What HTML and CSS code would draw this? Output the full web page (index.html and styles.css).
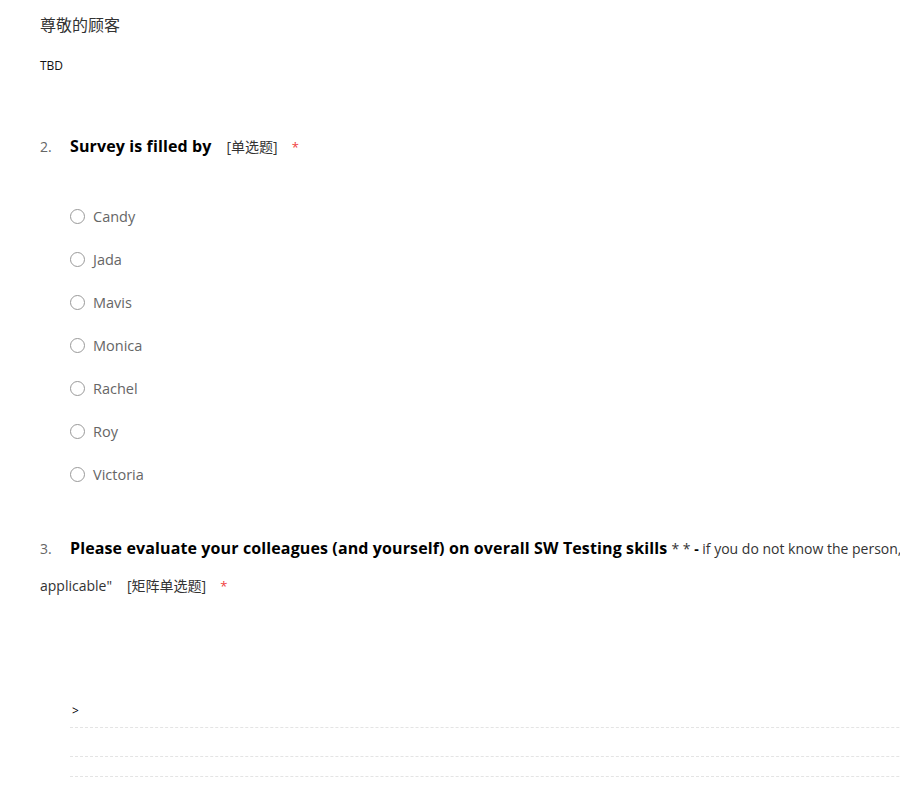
FILE: index.html
```html
<!DOCTYPE html>
<html lang="zh-CN">
<head>
<meta charset="utf-8">
<title>Survey</title>
<link rel="stylesheet" href="styles.css">
</head>
<body>
<div class="page">
  <div class="intro">
    <div class="greeting">尊敬的顾客</div>
    <div class="desc">TBD</div>
  </div>

  <div class="question q2">
    <div class="q-head">
      <span class="q-num">2.</span><span class="q-title">Survey is filled by</span><span class="q-type">[单选题]</span><span class="req">*</span>
    </div>
    <ul class="options">
      <li class="option"><span class="radio"></span><span class="opt-label">Candy</span></li>
      <li class="option"><span class="radio"></span><span class="opt-label">Jada</span></li>
      <li class="option"><span class="radio"></span><span class="opt-label">Mavis</span></li>
      <li class="option"><span class="radio"></span><span class="opt-label">Monica</span></li>
      <li class="option"><span class="radio"></span><span class="opt-label">Rachel</span></li>
      <li class="option"><span class="radio"></span><span class="opt-label">Roy</span></li>
      <li class="option"><span class="radio"></span><span class="opt-label">Victoria</span></li>
    </ul>
  </div>

  <div class="question q3">
    <div class="q-head wrap">
      <span class="q-num">3.</span><span class="q-title">Please evaluate your colleagues (and yourself) on overall SW Testing skills</span> <span class="q-note">* * <b>-</b> if you do not know the person, please choose "Not</span><br><span class="q-note">applicable"</span><span class="q-type">[矩阵单选题]</span><span class="req">*</span>
    </div>
    <div class="matrix">
      <div class="m-row m-head"><span class="m-arrow">&gt;</span></div>
      <div class="m-row m-r1"></div>
      <div class="m-row m-r2"></div>
    </div>
  </div>
</div>
</body>
</html>
```
FILE: styles.css
```css
html, body {
  margin: 0;
  padding: 0;
  background: #fff;
  overflow: hidden;
}
body {
  font-family: "Open Sans", "Noto Sans CJK SC", sans-serif;
  color: #333;
}
.page {
  padding-left: 40px;
  width: 1300px;
}
.greeting {
  margin-top: 10px;
  font-size: 16px;
  line-height: 30px;
  color: #333;
}
.desc {
  margin-top: 16px;
  font-size: 12px;
  line-height: 20px;
  color: #111;
}
.q2 {
  margin-top: 55px;
}
.q-head {
  line-height: 30px;
  white-space: nowrap;
}
.q-num {
  display: inline-block;
  width: 30px;
  font-size: 14px;
  color: #666;
}
.q-title {
  font-size: 16px;
  font-weight: 700;
  letter-spacing: 0.12px;
  color: #000;
}
.q-type {
  margin-left: 15px;
  font-size: 14px;
  color: #333;
}
.req {
  margin-left: 14px;
  font-size: 13px;
  color: #f04040;
}
.options {
  list-style: none;
  margin: 33px 0 0 30px;
  padding: 0;
}
.option {
  display: flex;
  align-items: center;
  height: 43px;
}
.radio {
  border: 1px solid #999;
  border-radius: 50%;
  box-sizing: border-box;
  width: 15px;
  height: 15px;
}
.opt-label {
  margin-left: 8px;
  font-size: 14.5px;
  color: #666;
}
.q3 {
  margin-top: 34px;
}
.q-head.wrap {
  line-height: 36px;
}
.q-note {
  font-size: 14px;
  color: #333;
}
.q-note b {
  color: #000;
}
.matrix {
  margin: 95px 0 0 30px;
}
.m-row {
  border-bottom: 1px dashed #e4e4e4;
  box-sizing: border-box;
}
.m-head {
  height: 29px;
  padding-top: 3px;
  line-height: 18px;
  font-size: 12px;
  color: #000;
}
.m-arrow {
  margin-left: 2px;
}
.m-r1 {
  height: 29px;
}
.m-r2 {
  height: 20px;
}
```
